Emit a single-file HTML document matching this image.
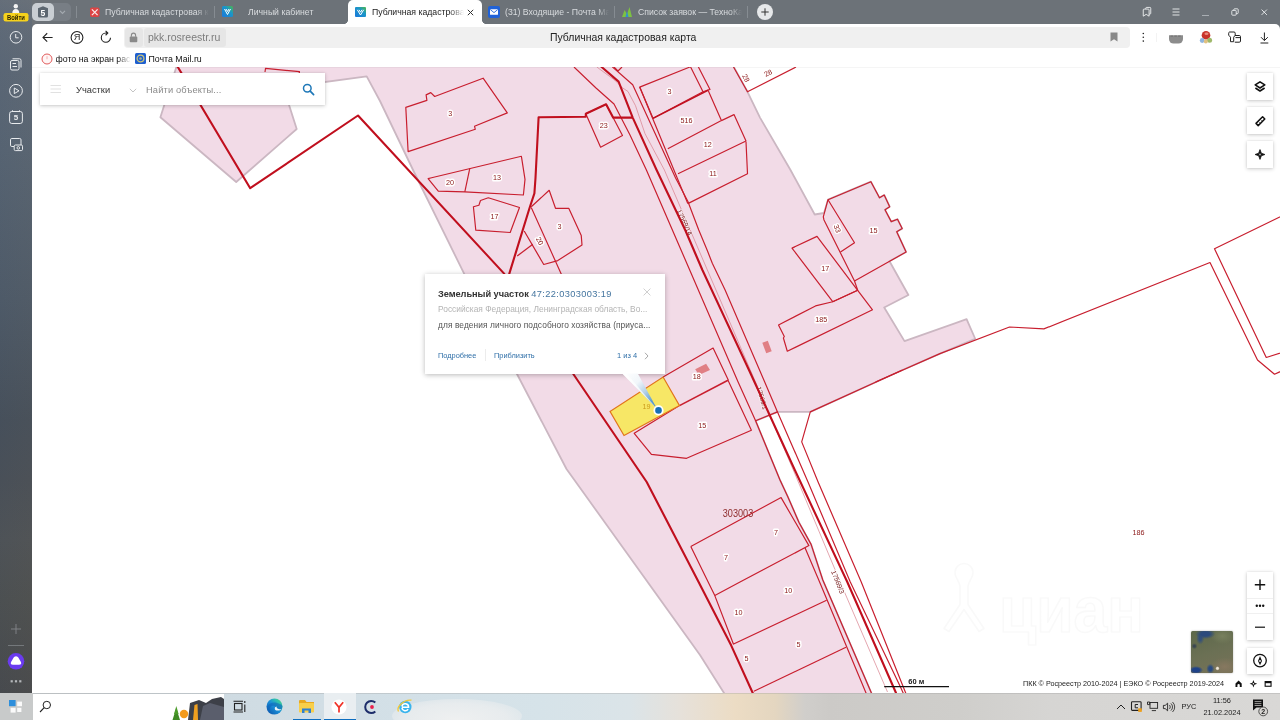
<!DOCTYPE html>
<html lang="ru">
<head>
<meta charset="utf-8">
<title>Публичная кадастровая карта</title>
<style>
*{box-sizing:border-box}
html,body{margin:0;padding:0}
body{width:1280px;height:720px;overflow:hidden;position:relative;background:#fff;font-family:"Liberation Sans",sans-serif;color:#222}
.abs{position:absolute}
#tabbar,#addr,#bm,#map,#taskbar,#sidebar,.t{will-change:transform}
svg{display:block;overflow:visible}
#tabbar{position:absolute;left:0;top:0;width:1280px;height:31px;background:#6c7278}
#sidebar{position:absolute;left:0;top:0;width:32px;height:693px;background:linear-gradient(90deg,rgba(60,90,130,.07),rgba(120,120,120,.05)),linear-gradient(180deg,#687079 0px,#616b77 26px,#5c6774 70px,#586471 150px,#4f5a66 300px,#474f58 420px,#4a4f55 480px,#4f5254 540px,#4d4f4e 600px,#48494a 693px)}
#content{position:absolute;left:32px;top:24px;width:1248px;height:669px;background:#fff;border-radius:5px 5px 0 0}
.tab{position:absolute;top:0;height:24px;font-size:8.7px;line-height:24px;color:#d9dcdf;white-space:nowrap;overflow:hidden}
.tab.active{background:#fff;color:#222;border-radius:5px 5px 0 0}
.tabsep{position:absolute;top:6px;width:1px;height:12px;background:#868c92}
#addr{position:absolute;left:124px;top:27px;width:1006px;height:21px;background:#f0f0f0;border-radius:4px}
#bm{position:absolute;left:32px;top:48px;width:1248px;height:19px;font-size:8.8px;color:#111}
#bm span{position:absolute;top:1px;line-height:21px;white-space:nowrap}
#map{position:absolute;left:32px;top:67px;width:1248px;height:626px;overflow:hidden;background:#fff}
#taskbar{position:absolute;left:0;top:693px;width:1280px;height:27px;overflow:hidden;background:linear-gradient(90deg,#c9ced1 0px,#cfdbe2 223px,#d3e0e7 400px,#d6e3e9 540px,#dbe4e8 630px,#e6e1da 680px,#ecdcc4 735px,#e4d6c0 775px,#d0cecb 805px,#cccac7 830px,#cfcecb 960px,#d6d5d3 1050px,#d9d8d6 1280px)}
.panel{position:absolute;background:#fff;box-shadow:0 1px 4px rgba(0,0,0,.2),0 0 2px rgba(0,0,0,.08)}
.lbl{font-size:7.2px;fill:#8a1616;text-anchor:middle;paint-order:stroke;stroke:#fff;stroke-width:3px;stroke-linejoin:round}
.t{position:absolute;white-space:nowrap;line-height:1}
</style>
</head>
<body>
<div id="tabbar">
  <!-- tab group -->
  <div class="abs" style="left:50px;top:3px;width:21px;height:18px;border-radius:0 5px 5px 0;background:#787e85"></div>
  <div class="abs" style="left:32px;top:3px;width:21.5px;height:18px;border-radius:5px;background:#c9ced3"></div>
  <svg class="abs" style="left:36px;top:5px" width="14" height="14" viewBox="0 0 14 14"><path d="M2,3.2 L7,1.2 L12,3.2 V11 a1.5,1.5 0 0 1 -1.5,1.5 H3.5 A1.5,1.5 0 0 1 2,11 Z" fill="#5c6670"/><text x="7" y="10.6" font-size="8.6" font-weight="bold" fill="#fff" text-anchor="middle" font-family="Liberation Sans, sans-serif">5</text></svg>
  <svg class="abs" style="left:58px;top:9px" width="9" height="6" viewBox="0 0 9 6"><path d="M2,1.8 L4.5,4.3 L7,1.8" fill="none" stroke="#a4aab0" stroke-width="1.2"/></svg>
  <div class="tabsep" style="left:76px"></div>
  <!-- tab1 -->
  <svg class="abs" style="left:89.5px;top:6.5px" width="9.5" height="10.5" viewBox="0 0 11 11"><rect width="11" height="11" rx="2" fill="#dc4444"/><path d="M2.2,2.2 L8.8,8.8 M8.8,2.2 L2.2,8.8" stroke="#fbe9e9" stroke-width="1.5"/></svg>
  <div class="tab" style="left:105px;width:104px;-webkit-mask-image:linear-gradient(90deg,#000 88%,transparent 100%)">Публичная кадастровая ка</div>
  <div class="tabsep" style="left:214px"></div>
  <!-- tab2 -->
  <svg class="abs" style="left:222px;top:6px" width="11" height="11" viewBox="0 0 11 11"><defs><linearGradient id="fg2" x1="0" y1="1" x2="1" y2="0"><stop offset="0" stop-color="#1a78dc"/><stop offset=".6" stop-color="#1b96c8"/><stop offset="1" stop-color="#4cb84a"/></linearGradient></defs><rect width="11" height="11" rx="1.5" fill="url(#fg2)"/><path d="M2.5,3 L5.5,8.5 L8.5,3 M4,3 L5.5,5.5 L7,3" stroke="#fff" stroke-width="1" fill="none"/></svg>
  <div class="tab" style="left:248px;width:80px">Личный кабинет</div>
  <!-- active tab -->
  <div class="tab active" style="left:348px;width:134px"></div>
  <div class="abs" style="left:343px;top:19px;width:5px;height:5px;background:radial-gradient(circle at 0 0,transparent 5px,#fff 5.5px)"></div>
  <div class="abs" style="left:482px;top:19px;width:5px;height:5px;background:radial-gradient(circle at 100% 0,transparent 5px,#fff 5.5px)"></div>
  <svg class="abs" style="left:355px;top:7px" width="11" height="10" viewBox="0 0 11 10"><defs><linearGradient id="fg" x1="0" y1="1" x2="1" y2="0"><stop offset="0" stop-color="#1a78dc"/><stop offset=".6" stop-color="#1b96c8"/><stop offset="1" stop-color="#4cb84a"/></linearGradient></defs><rect width="11" height="10" rx="1" fill="url(#fg)"/><path d="M2.3,2.8 L5.5,8 L8.7,2.8 M4,2.8 L5.5,5.2 L7,2.8" stroke="#fff" stroke-width="1" fill="none"/></svg>
  <div class="tab" style="left:372px;width:92px;color:#222;-webkit-mask-image:linear-gradient(90deg,#000 85%,transparent 100%)">Публичная кадастровая</div>
  <svg class="abs" style="left:467px;top:9px" width="7" height="7" viewBox="0 0 7 7"><path d="M0.8,0.8 L6.2,6.2 M6.2,0.8 L0.8,6.2" stroke="#333" stroke-width="1"/></svg>
  <!-- tab4 -->
  <svg class="abs" style="left:488px;top:6px" width="12" height="12" viewBox="0 0 12 12"><rect width="12" height="12" rx="2" fill="#2062d8"/><rect x="2" y="3.2" width="8" height="5.6" rx=".6" fill="#fff"/><path d="M2.3,3.6 L6,6.6 L9.7,3.6" stroke="#2062d8" stroke-width=".9" fill="none"/></svg>
  <div class="tab" style="left:505px;width:104px;-webkit-mask-image:linear-gradient(90deg,#000 88%,transparent 100%)">(31) Входящие - Почта Mail</div>
  <div class="tabsep" style="left:614px"></div>
  <!-- tab5 -->
  <svg class="abs" style="left:621px;top:6px" width="12" height="12" viewBox="0 0 12 12"><path d="M1,11 L3.5,4 L6,8 L8.5,1 L11,11 Z" fill="#7dc242"/><path d="M4.5,11 L6,5 L7.5,11 Z" fill="#2f8fd0"/></svg>
  <div class="tab" style="left:638px;width:104px;-webkit-mask-image:linear-gradient(90deg,#000 88%,transparent 100%)">Список заявок — ТехноКад</div>
  <div class="tabsep" style="left:747px"></div>
  <!-- new tab -->
  <div class="abs" style="left:757px;top:4px;width:16px;height:16px;border-radius:8px;background:#e6e8ea"></div>
  <svg class="abs" style="left:761px;top:8px" width="8" height="8" viewBox="0 0 8 8"><path d="M4,0.3 V7.7 M0.3,4 H7.7" stroke="#333" stroke-width="1"/></svg>
  <!-- window controls -->
  <svg class="abs" style="left:1142px;top:7px" width="10" height="10" viewBox="0 0 12 12" fill="none" stroke="#eef0f1" stroke-width="1.1"><path d="M4.5,2.5 V1.5 a1,1 0 0 1 1,-1 H9.5 a1,1 0 0 1 1,1 V7.5 a1,1 0 0 1 -1,1 H8.5"/><path d="M1.5,3.5 a1,1 0 0 1 1,-1 H7.5 a1,1 0 0 1 1,1 V11 L5,8.8 L1.5,11 Z"/></svg>
  <svg class="abs" style="left:1172px;top:8px" width="8" height="8" viewBox="0 0 8 8" stroke="#eef0f1" stroke-width=".9"><path d="M0.5,1 H7.5 M0.5,4 H7.5 M0.5,7 H7.5"/></svg>
  <div class="abs" style="left:1202px;top:14.5px;width:7px;height:1px;background:#a9aeb3"></div>
  <svg class="abs" style="left:1231px;top:8px" width="8" height="8" viewBox="0 0 10 10" fill="none" stroke="#eef0f1" stroke-width="1.1"><rect x="1" y="3" width="5.5" height="6" rx="1"/><path d="M3.5,3 V2 a1,1 0 0 1 1,-1 H8 a1,1 0 0 1 1,1 V6 a1,1 0 0 1 -1,1 H6.5"/></svg>
  <svg class="abs" style="left:1261px;top:9px" width="6.5" height="6.5" viewBox="0 0 8 8"><path d="M0.7,0.7 L7.3,7.3 M7.3,0.7 L0.7,7.3" stroke="#eef0f1" stroke-width="1.1"/></svg>
</div>
<div id="sidebar">
  <!-- profile -->
  <svg class="abs" style="left:0;top:0" width="32" height="24" viewBox="0 0 32 24"><circle cx="15.8" cy="6.2" r="2.2" fill="#f4f4f4"/><path d="M12.3,13.5 a3.5,4.6 0 0 1 7,0 Z" fill="#f4f4f4"/><rect x="3.5" y="13" width="25" height="8.6" rx="2.3" fill="#f6d21c"/><text x="16" y="19.8" font-size="6.6" font-weight="bold" fill="#2e2500" text-anchor="middle" textLength="18" lengthAdjust="spacingAndGlyphs" font-family="Liberation Sans, sans-serif">Войти</text></svg>
  <svg class="abs" style="left:0;top:24px" width="32" height="140" viewBox="0 24 32 140" fill="none" stroke="#e8ebee" stroke-width="1">
    <circle cx="16" cy="37.3" r="5.8"/><path d="M15.7,34 V37.8 H18.6"/>
    <rect x="10.5" y="60.5" width="8.5" height="9.5" rx="1.5"/><path d="M12.5,58.8 H19.5 a1.5,1.5 0 0 1 1.5,1.5 V67.5"/><path d="M12.5,63.5 H16 M12.5,66.5 H17"/>
    <circle cx="16" cy="90.8" r="6.4"/><path d="M14.3,88 L19,90.8 L14.3,93.6 Z"/>
    <rect x="9.6" y="111.5" width="12.8" height="12" rx="2.2"/><path d="M12.5,111 V110.3 M19.5,111 V110.3"/>
    <rect x="10.5" y="138.5" width="10.5" height="8" rx="1.3"/><rect x="14.2" y="145" width="8.3" height="5.6" rx="1.2" fill="#55616d"/><circle cx="18.3" cy="147.9" r="1.3"/>
  </svg>
  <div class="t" style="left:0;width:32px;top:113.6px;text-align:center;font-size:8px;font-weight:bold;color:#e8ebee">5</div>
  <svg class="abs" style="left:0;top:620px" width="32" height="70" viewBox="0 620 32 70"><path d="M16,624 V634 M11,629 H21" stroke="#83878a" stroke-width=".9" fill="none"/><path d="M8,645.5 H24" stroke="#74787b" stroke-width="1"/><circle cx="16" cy="661.3" r="8.3" fill="#6a3bf0"/><path d="M16,656.3 c1.2,0 1.9,0.7 2.6,1.8 l2.2,3.6 c1,1.7 0.2,3 -1.8,3 h-6 c-2,0 -2.8,-1.3 -1.8,-3 l2.2,-3.6 c0.7,-1.1 1.4,-1.8 2.6,-1.8 Z" fill="#fff"/><rect x="10.6" y="680.2" width="2.2" height="2.2" fill="#b4b7ba"/><rect x="14.9" y="680.2" width="2.2" height="2.2" fill="#b4b7ba"/><rect x="19.2" y="680.2" width="2.2" height="2.2" fill="#b4b7ba"/></svg>
</div>
<div id="content"></div>
<!-- toolbar -->
<svg class="abs" style="left:32px;top:24px" width="100" height="24" viewBox="32 23.55 100 24" fill="none" stroke="#222" stroke-width="1.1"><path d="M52.6,37 H43.2 M47.2,32.8 L43,37 L47.2,41.2"/><circle cx="77" cy="37" r="5.9"/><path d="M114.5,37.2 a4.6,4.6 0 1 1 -4.6,-4.6 h1.5 M109.6,30.4 L111.8,32.6 L109.6,34.8" transform="translate(-4,0)"/></svg>
<div class="t" style="left:71px;width:12px;top:33px;text-align:center;font-size:9.2px;color:#222">Я</div>
<div id="addr">
  <div class="abs" style="left:1px;top:1px;width:18px;height:19px;border-radius:3px;background:#e6e6e6"></div>
  <svg class="abs" style="left:5px;top:5px" width="9" height="11" viewBox="0 0 9 11"><rect x="0.7" y="4.6" width="7.6" height="5.6" rx="1" fill="#8a8a8a"/><path d="M2.4,4.8 V3.2 a2.1,2.1 0 0 1 4.2,0 V4.8" stroke="#8a8a8a" stroke-width="1.1" fill="none"/></svg>
  <div class="abs" style="left:20px;top:1px;width:82px;height:19px;border-radius:3px;background:#e6e6e6"></div>
  <div class="t" style="left:24px;top:5.3px;font-size:10.5px;color:#7c7c7c">pkk.rosreestr.ru</div>
  <div class="t" style="left:426px;width:146px;top:5.8px;font-size:10.45px;color:#222;text-align:center">Публичная кадастровая карта</div>
  <svg class="abs" style="left:986px;top:5px" width="8" height="10" viewBox="0 0 8 10"><path d="M0.5,0.5 H7.5 V9.5 L4,7.2 L0.5,9.5 Z" fill="#888"/></svg>
</div>
<svg class="abs" style="left:1136px;top:27px" width="144" height="21" viewBox="1136 27 144 21">
  <circle cx="1143.3" cy="33.5" r=".8" fill="#222"/><circle cx="1143.3" cy="37.3" r=".8" fill="#222"/><circle cx="1143.3" cy="41.1" r=".8" fill="#222"/>
  <path d="M1156.5,33 V42" stroke="#f3f3f3" stroke-width="1"/>
  <path d="M1169,35.2 H1183 V39 a4.5,4.6 0 0 1 -4.5,4.6 H1173.5 a4.5,4.6 0 0 1 -4.5,-4.6 Z" fill="#8c8c8c"/><path d="M1170.5,36.3 H1181.5" stroke="#7a7a7a" stroke-width="1.4" stroke-dasharray="2.6 1.2"/>
  <circle cx="1206" cy="35.2" r="4.3" fill="#c8332b"/><ellipse cx="1206.5" cy="33.8" rx="2" ry="1.2" fill="#e88a7c"/><circle cx="1202.2" cy="40.5" r="2.4" fill="#8fb4de"/><circle cx="1209.6" cy="40.3" r="2.5" fill="#9fb86a"/><circle cx="1205.8" cy="41.5" r="2" fill="#e0c080"/>
  <g fill="none" stroke="#222" stroke-width="1"><path d="M1229.5,32 h4.5 a1.2,1.2 0 0 1 1.2,1.2 v2 l-1.5,2 v4.5 h-3.2 v-4.5 l-1.8,-2 v-2 a1.2,1.2 0 0 1 0.8,-1.2 Z"/><path d="M1235,35.5 h4.3 a1.2,1.2 0 0 1 1.2,1.2 v4.3 a1.2,1.2 0 0 1 -1.2,1.2 h-4.5"/><path d="M1235.5,37.6 h5"/></g>
  <path d="M1264.4,32.5 V40.5 M1261,37.2 L1264.4,40.6 L1267.8,37.2 M1260.5,43 H1268.3" fill="none" stroke="#222" stroke-width="1"/>
</svg>
<div id="bm">
  <svg class="abs" style="left:9px;top:4.5px" width="12" height="12" viewBox="0 0 12 12"><circle cx="6" cy="6" r="5" fill="#fff5f5" stroke="#e05a5a" stroke-width="1"/><path d="M6,3.2 V6.2" stroke="#f0a0a0" stroke-width=".8"/></svg>
  <span style="left:23.5px;-webkit-mask-image:linear-gradient(90deg,#000 82%,transparent 100%)">фото на экран рас</span>
  <svg class="abs" style="left:103px;top:5px" width="11" height="11" viewBox="0 0 11 11"><rect width="11" height="11" rx="1.5" fill="#1e5fd0"/><circle cx="5.5" cy="5.5" r="3.4" fill="none" stroke="#c9c27a" stroke-width="1.3"/><circle cx="5.5" cy="5.5" r="1.3" fill="#a9b08a"/></svg>
  <span style="left:116.5px">Почта Mail.ru</span>
</div>
<div id="map">
<svg class="abs" style="left:-32px;top:-67px" width="1280" height="720" viewBox="0 0 1280 720" font-family="Liberation Sans, sans-serif">
<!-- quarter fill -->
<path id="quarter" fill="#f2dbe7" stroke="#cbb7c2" stroke-width="1.8" stroke-linejoin="round" d="M178.6,60 L160.4,117.2 L236.2,182 L296.7,129 L283.5,87.6 L366.7,76.4 L380,101 L414,172 L464,273.4 L517.5,375 L566.5,469 L639,570 L700,655 L723.4,692 L730,702 L875,702 L871,692 L822.8,580 L811.1,544.4 L798.9,522.2 L787.8,496.7 L780,480 L755.6,420.8 L777.5,411.9 L810.3,411.9 L902.5,370 L940,353.6 L975.2,338.75 L966.6,319.2 L904.5,341.1 L884.2,307.5 L908.4,295 L889.5,261.3 L906.1,252 L896.7,231.7 L902.2,228.6 L897.5,219.2 L891.25,221.6 L885,209.8 L889.7,206.7 L884.2,195 L879.5,197.8 L870.9,181.7 L828,199.7 L824,213 L814.7,214.5 L790.5,170 L760,117.6 L747.5,91.8 L730,60 Z"/>
<g fill="none" stroke="#c81e2e" stroke-width="1.18" stroke-linejoin="round">
<!-- parcel 3 left -->
<path d="M405.8,107.4 L426.9,100.4 L426.1,94.9 L430.8,92.6 L434.7,96.5 L483.1,78.2 L507.3,112.9 L474.5,126.2 L475.3,129.3 L408.1,151.6 Z"/>
<!-- parcels 20,13 -->
<path d="M431.6,177.7 L521.4,156.3 L525,179.4 L523.4,195 L464.8,191.9 L438.3,191.1 L428.1,178.6 Z"/>
<path d="M469.8,168.3 L464.8,191.9"/>
<!-- parcel 17 left -->
<path d="M473.4,206.7 L478.9,205.2 L480.5,200.5 L488.3,197.8 L519.5,207.5 L510.2,232.5 L475.8,230.2 Z"/>
<!-- parcel 3 mid & 20 strip -->
<path d="M531.25,206.7 L549.2,190.3 L555.5,208.3 L568.75,208.3 L581.25,235.6 L582,245 L557.8,260.6 L543.75,264.5 L524.2,231"/>
<path d="M531.25,207.5 L561,273.4 L566,284"/>
<path d="M517.2,256 L532.8,244.2"/>
<!-- small sliver top -->
<path d="M265,72 L265.5,68.4 L299.5,71.7 L299,74"/>
<!-- parcel 23 -->
<path d="M585.8,113.7 L606.1,104.3 L622.5,135.5 L600.6,147.25 Z"/>
<!-- parcel 3 right + strip -->
<path d="M639.7,87.1 L690.5,66.8 L703,91.8 L653,118.3 Z"/>
<path d="M698.3,66.8 L710,89.4 L703,91.8"/>
<!-- 516 -->
<path d="M708.4,91 L721.4,120.6 L667.8,148.8"/>
<!-- 12 -->
<path d="M721.4,120.6 L734,114.6 L746,141 L678,173.8"/>
<!-- 11 -->
<path d="M746,141.8 L747.5,173.8 L687.8,203.6"/>
<!-- parcels left boundary double -->
<path d="M639.7,87.1 L677.2,178 L687.8,203.6"/>
<!-- 28 -->
<path d="M733.4,66.8 L747.5,91.8 L796,67"/>
<!-- tick at top of road -->
<path d="M614,67 L618,71 L622,67"/>
<!-- road thin lines -->
<path id="L1" d="M574,67 L596,88 L614,104 L630,135 L646.4,170 L689.7,270 L738.1,382 L755.6,420.8 L780,480 L787.8,496.7 L798.9,522.2 L811.1,544.4 L822.8,580 L871,692 L875,702"/>
<path id="L1a" d="M805,547.8 L818.75,580 L865.6,692 L870,702"/>
<path id="L2" d="M612.3,66.8 L632.7,84.75 L675.6,178 L687.8,201.25 L698.75,230 L707.5,251 L712.3,263.3 L725,289.75 L764.7,382 L777.5,411.9 L808,482 L850.3,582 L900,686 L905,697"/>
<path id="L3" d="M902.5,370 L810.3,411.9 L801.7,441.9 L818.1,482 L861.25,582 L905.3,692 L909.4,702"/>
<path d="M755.6,420.8 L777.5,411.9"/>
<path stroke-width="0.7" stroke="#d8808c" d="M596.8,67 L614.8,80.2 L622.3,87.7 L628,91.5 L635.5,105.7 L645,133.7 L664.4,170 L793.3,470 L845.3,594 L887.5,692"/>
<!-- right big white parcels -->
<path d="M875.6,382 L940,353.6 L1009.5,327 L1043.9,328.9 L1210,262.5 L1257.5,360 L1274.5,374.25 L1285,369.5"/>
<path d="M1285,214.5 L1214.5,248.75 L1266.25,357.5 L1285,351.5"/>
<!-- parcel 15 / 33 upper right -->
<path d="M828,199.7 L870.9,181.7 L879.5,197.8 L884.2,195 L889.7,206.7 L885,209.8 L891.25,221.6 L897.5,219.2 L902.2,228.6 L896.7,231.7 L906.1,252 L854.5,281 L824,220 L823.3,216.9 Z"/>
<path d="M828,199.7 L854.5,242.7 L840.5,252"/>
<!-- 17 right -->
<path d="M792,248.1 L817,236.4 L857.7,290.3 L832.7,301.7 Z"/>
<path d="M854.5,281 L857.7,290.3"/>
<!-- 185 -->
<path d="M778.5,325 L815.5,305.9 L832.7,301.7 L857.7,290.3 L872.5,309.8 L787.3,351.25 L783.4,338 L784.3,336.5 Z"/>
<!-- parcel 18 -->
<path d="M663.1,377 L713.1,348.1 L728.4,380.2"/>
<!-- parcel 15 lower -->
<path d="M728,380.2 L751.4,430.2 L686.6,458.3 L651.4,454.4 L634.2,433.3 L679.5,405.6"/>
<path stroke-width="1.6" d="M679.5,405.6 L728,380.2"/>
<!-- parcels 7,10,5 -->
<path d="M690.8,546.6 L781.1,497.6 L808.9,545.6 L740,582 L714.8,595.6"/>
<path d="M690.8,546.6 L714.8,595.6 L733.6,644.5"/>
<path d="M733.6,644 L826.6,600.3"/>
<path d="M753.9,691.25 L846,647.2"/>
</g>
<!-- buildings -->
<path fill="#e07f84" d="M762.3,342.7 L767.8,340.8 L771.7,351.25 L766.25,353.3 Z"/>
<path fill="#e07f84" d="M695.2,369.2 L706.1,363.75 L710,370 L699,375 Z"/>
<g class="lbl" style="font-size:6.6px;fill:#701212">
<text transform="translate(684.7,222.3) rotate(65)" y="2.3" style="stroke:#f9eef3;stroke-width:1.4px">17569/14</text>
<text transform="translate(762,398) rotate(74)" y="2.3" style="stroke:#fbf3f6;stroke-width:1.6px">17569/1</text>
<text transform="translate(837.8,582) rotate(68)" y="2.3" style="stroke:#fff;stroke-width:2px;font-size:6.8px">17569/3</text>
</g>
<!-- thick lines -->
<g fill="none" stroke="#c00f1e" stroke-width="2.1" stroke-linejoin="round">
<path d="M173.6,60 L177.8,67 L250.2,188.2 L358,115.5 L503.9,273.4 L507,278 L573.3,374 L646.7,482 L698.6,582 L731.25,645.6 L752.3,692 L757,702"/>
<path d="M632.7,117.6 L613.1,117.6 L606.1,104.3 L585.8,113.7 L585.8,116.8 L538.6,117.25 L535.5,178 L534.4,193.4 L529.7,207.5 L509.4,273.4 L507,278"/>
<path d="M596,62 L601.4,66.8 L618.6,81.6 L632.7,117.6 L656.6,170 L685.2,230 L702.4,270 L749,370 L794.8,470 L847.3,582 L895.6,692 L900,702"/>
<path stroke-width="1.5" d="M653,118.3 L708.4,90.2"/>
</g>
<!-- selected parcel -->
<path fill="#f7e766" stroke="#e2741c" stroke-width="1.15" d="M610,411.4 L663.1,377 L679.5,405.6 L624,435.6 Z"/>
<!-- labels -->
<g class="lbl">
<text x="450.3" y="116.2">3</text>
<text x="450" y="184.7">20</text>
<text x="496.9" y="180.3">13</text>
<text x="494.5" y="218.6">17</text>
<text x="559.4" y="228.7">3</text>
<text x="603.7" y="127.9">23</text>
<text x="669.4" y="94.3">3</text>
<text x="686.6" y="122.7">516</text>
<text x="707.7" y="146.6">12</text>
<text x="713.1" y="176">11</text>
<text x="873.6" y="232.7">15</text>
<text x="825.3" y="271.2">17</text>
<text x="821.2" y="321.7">185</text>
<text x="696.7" y="379.1">18</text>
<text x="702.2" y="427.5">15</text>
<text x="776" y="534.5">7</text>
<text x="726" y="559.5">7</text>
<text x="788.3" y="593.1">10</text>
<text x="738.6" y="615">10</text>
<text x="798.4" y="646.5">5</text>
<text x="746.4" y="661.1">5</text>
<text x="1138.5" y="534.5" style="stroke:none">186</text>
<text transform="translate(539.8,241.1) rotate(62)" y="2.5">20</text>
<text transform="translate(837.3,228.6) rotate(68)" y="2.5">33</text>
<text transform="translate(746,78) rotate(62)" y="2.5" style="stroke:none">28</text>
<text transform="translate(768,73) rotate(-28)" y="2.5" style="stroke:none">28</text>
<text x="646.4" y="409.2" style="fill:#cc9c1c;stroke:none">19</text>
<text x="738" y="516.8" textLength="30.5" lengthAdjust="spacingAndGlyphs" style="font-size:10.6px;fill:#8f2e2e;stroke:none">303003</text>
</g>
<!-- watermark -->
<g fill="#fff" stroke="rgba(90,90,90,.035)" stroke-width="1.6" stroke-linejoin="round">
<path d="M964,563.5 a9,9 0 0 1 9,9 c0,5 -4,8 -5,14 l0,18 l16,24 l-5,3 l-15,-22 l-15,22 l-5,-3 l16,-24 l0,-18 c-1,-6 -5,-9 -5,-14 a9,9 0 0 1 9,-9 Z"/>
<text x="999" y="632" font-size="64" font-weight="bold" textLength="145" lengthAdjust="spacingAndGlyphs">циан</text>
</g>
<!-- scale -->
<path d="M884.2,686.7 H949" stroke="#111" stroke-width="1.3" fill="none"/>
<text x="916.3" y="684" font-size="7.5" font-weight="bold" fill="#222" text-anchor="middle">60 м</text>
</svg>
<div class="abs" style="left:0;top:0;width:1248px;height:1px;background:rgba(120,120,120,.07)"></div>
<!-- search panel -->
<div class="panel" style="left:8px;top:6px;width:285px;height:32.4px">
  <svg class="abs" style="left:10px;top:11px" width="12" height="10" viewBox="0 0 12 10"><path d="M0.5,1.5 H11 M0.5,5 H11 M0.5,8.5 H11" stroke="#e1e1e1" stroke-width="1"/></svg>
  <div class="t" style="left:35.5px;top:12.8px;font-size:9.3px;color:#333">Участки</div>
  <svg class="abs" style="left:89px;top:14.5px" width="8" height="5" viewBox="0 0 8 5"><path d="M0.8,0.8 L4,4 L7.2,0.8" fill="none" stroke="#c4c4c4" stroke-width="1"/></svg>
  <div class="t" style="left:105.6px;top:12.8px;font-size:9.3px;letter-spacing:.15px;color:#8a8a8a">Найти объекты...</div>
  <svg class="abs" style="left:262px;top:10px" width="13" height="13" viewBox="0 0 13 13"><circle cx="5.3" cy="5.3" r="3.8" fill="none" stroke="#1f78b8" stroke-width="1.5"/><path d="M8.2,8.2 L11.6,11.6" stroke="#1f78b8" stroke-width="1.7" stroke-linecap="round"/></svg>
</div>
<!-- right tools -->
<div class="panel" style="left:1215px;top:6px;width:26px;height:26.5px"></div>
<div class="panel" style="left:1215px;top:40px;width:26px;height:26.5px"></div>
<div class="panel" style="left:1215px;top:74px;width:26px;height:26.5px"></div>
<svg class="abs" style="left:1215px;top:6px" width="26" height="95" viewBox="0 0 26 95" fill="none" stroke="#111" stroke-width="1.6" stroke-linejoin="round">
  <path d="M13,8.8 L17.8,11.9 L13,15 L8.2,11.9 Z"/><path d="M8.4,15 L13,18 L17.6,15"/>
  <path d="M9,50.4 L15.6,43.8 L17.8,46 L11.2,52.6 Z" stroke-width="1.5"/><path d="M12.2,49.4 L13,50.2 M14.4,47.2 L15.2,48" stroke-width=".8"/>
  <path d="M13,76.6 L14.3,80.2 L17.9,81.5 L14.3,82.8 L13,86.4 L11.7,82.8 L8.1,81.5 L11.7,80.2 Z" fill="#111" stroke-width=".8"/><circle cx="13" cy="81.5" r="1.1" fill="#999" stroke="none"/>
</svg>
<!-- zoom controls -->
<div class="panel" style="left:1215px;top:504.5px;width:26px;height:68.5px"></div>
<div class="abs" style="left:1215px;top:530.5px;width:26px;height:1px;background:#f0f0f0"></div>
<div class="abs" style="left:1215px;top:546px;width:26px;height:1px;background:#f0f0f0"></div>
<svg class="abs" style="left:1215px;top:504.5px" width="26" height="69" viewBox="0 0 26 69"><path d="M13,7.5 V18 M7.8,12.7 H18.2" stroke="#111" stroke-width="1.4"/><circle cx="9.8" cy="33.8" r="1.2" fill="#111"/><circle cx="13" cy="33.8" r="1.2" fill="#111"/><circle cx="16.2" cy="33.8" r="1.2" fill="#111"/><path d="M8,55.2 H18" stroke="#111" stroke-width="1.2"/></svg>
<div class="panel" style="left:1215px;top:581px;width:26px;height:25.5px"></div>
<svg class="abs" style="left:1215px;top:581px" width="26" height="26" viewBox="0 0 26 26"><circle cx="13" cy="12.6" r="6.3" fill="none" stroke="#111" stroke-width="1.3"/><path d="M13,8 L15,13 L13,17.2 L11,13 Z" fill="#111"/><circle cx="13" cy="13" r=".9" fill="#fff"/></svg>
<!-- minimap -->
<div class="abs" style="left:1159px;top:564px;width:42px;height:41.5px;border-radius:1.5px;box-shadow:0 0 2px rgba(0,0,0,.3);background:radial-gradient(ellipse 10px 5px at 34% 7%,#2c4a7c 45%,rgba(60,90,110,0) 100%),radial-gradient(ellipse 4px 6px at 22% 18%,#34507a 30%,rgba(60,90,110,0) 100%),radial-gradient(ellipse 3px 3px at 8% 36%,#3a4650 30%,rgba(60,70,70,0) 100%),radial-gradient(ellipse 7px 4px at 12% 93%,#1f4288 50%,rgba(40,70,120,0) 100%),radial-gradient(ellipse 4px 5px at 46% 90%,#2a4a80 40%,rgba(40,70,120,0) 100%),radial-gradient(circle 2.2px at 63% 89%,#efe6d6 40%,rgba(230,220,200,0) 100%),radial-gradient(ellipse 14px 9px at 80% 85%,#877860 0,rgba(135,120,96,0) 100%),radial-gradient(ellipse 12px 8px at 75% 12%,#78805e 0,rgba(120,128,94,0) 100%),linear-gradient(160deg,#5c684a 0%,#6b7054 50%,#777258 100%)"></div>
<!-- attribution -->
<div class="t" style="left:990.5px;top:612.6px;font-size:7.23px;color:#1c1c1c">ПКК © Росреестр 2010-2024 | ЕЭКО © Росреестр 2019-2024</div>
<svg class="abs" style="left:1200px;top:611px" width="46" height="12" viewBox="1232 678 46 12"><path d="M1238.6,680.6 L1241.7,683.5 V687 H1239.8 V685.2 a1.2,1.2 0 0 0 -2.4,0 V687 H1235.5 V683.5 Z" fill="#111"/><path d="M1253.4,680 L1254.4,682.8 L1257.2,683.8 L1254.4,684.8 L1253.4,687.6 L1252.4,684.8 L1249.6,683.8 L1252.4,682.8 Z" fill="#111"/><circle cx="1253.4" cy="683.8" r=".8" fill="#fff"/><rect x="1264.6" y="681" width="7" height="5.8" fill="#111"/><rect x="1265.7" y="683.2" width="4.8" height="2.5" fill="#fff"/></svg>
<!-- popup -->
<div class="abs" style="left:393px;top:207px;width:240px;height:99.6px;background:#fff;box-shadow:0 1px 5px rgba(0,0,0,.28)">
  <div class="t" style="left:13.3px;top:16px;font-size:9.25px;color:#333"><b style="letter-spacing:-.05px">Земельный участок</b> <span style="color:#44759f;letter-spacing:.36px">47:22:0303003:19</span></div>
  <svg class="abs" style="left:218px;top:13.7px" width="8" height="8" viewBox="0 0 8 8"><path d="M0.6,0.6 L7.4,7.4 M7.4,0.6 L0.6,7.4" stroke="#cfcfcf" stroke-width="1"/></svg>
  <div class="t" style="left:13.3px;top:31.2px;font-size:8.38px;color:#b4b4b4">Российская Федерация, Ленинградская область, Во...</div>
  <div class="t" style="left:13.3px;top:46.6px;font-size:8.35px;letter-spacing:.09px;color:#555">для ведения личного подсобного хозяйства (приуса...</div>
  <div class="t" style="left:13.3px;top:77.9px;font-size:7.4px;color:#2f6fa8">Подробнее</div>
  <div class="abs" style="left:59.5px;top:75px;width:1px;height:12px;background:#ececec"></div>
  <div class="t" style="left:68.5px;top:77.9px;font-size:7.4px;color:#2f6fa8">Приблизить</div>
  <div class="t" style="left:192px;top:77.9px;font-size:7.5px;color:#2f6fa8">1 из 4</div>
  <svg class="abs" style="left:219px;top:77.5px" width="5" height="8" viewBox="0 0 5 8"><path d="M1,0.8 L4,4 L1,7.2" fill="none" stroke="#a8a8a8" stroke-width="1"/></svg>
</div>
<svg class="abs" style="left:580px;top:300px" width="60" height="60" viewBox="612 367 60 60"><defs><linearGradient id="tail" x1="0" y1="0" x2="1" y2="1"><stop offset="0" stop-color="#ffffff"/><stop offset=".35" stop-color="#f1f6fa"/><stop offset=".6" stop-color="#b3d0e7"/><stop offset=".82" stop-color="#5e9dd0"/><stop offset="1" stop-color="#3f88c6"/></linearGradient></defs><path d="M622.3,373.6 H637.8 L656.8,408.4 Z" fill="url(#tail)"/><path d="M622.3,373.6 H626.5 L656.4,408.2 Z" fill="#fff" opacity=".75"/><circle cx="658.5" cy="410.4" r="5.1" fill="#fff"/><circle cx="658.5" cy="410.4" r="3.3" fill="#166fb6"/></svg>
</div>
<div id="taskbar">
  <div class="abs" style="left:392px;top:6px;width:130px;height:34px;border-radius:50%;background:radial-gradient(ellipse at 50% 60%,rgba(240,241,241,.95) 0,rgba(236,238,239,.8) 55%,rgba(230,236,239,0) 100%)"></div>
  <div class="abs" style="left:0;top:0;width:1280px;height:1px;background:rgba(160,160,160,.35)"></div>
  <div class="abs" style="left:0;top:0;width:33px;height:27px;background:#c8caca"></div>
  <svg class="abs" style="left:9px;top:7px" width="14" height="14" viewBox="0 0 14 14"><rect x="0" y="0" width="6.6" height="6.2" fill="#2e8fdc"/><rect x="8.2" y="1.6" width="4.8" height="4.6" fill="#fafafa"/><rect x="1.6" y="7.8" width="5" height="4.8" fill="#fafafa"/><rect x="8.2" y="7.8" width="4.2" height="4.2" fill="#fafafa"/></svg>
  <div class="abs" style="left:33px;top:1px;width:191px;height:25.5px;background:#fff"></div>
  <svg class="abs" style="left:39px;top:7px" width="13" height="13" viewBox="0 0 13 13"><circle cx="7.8" cy="5" r="3.7" fill="none" stroke="#222" stroke-width="1"/><path d="M5.2,7.7 L1,12" stroke="#222" stroke-width="1.1"/></svg>
  <svg class="abs" style="left:170px;top:1px" width="54" height="26" viewBox="170 0 54 26"><path d="M188,26 L190,9 L199,6 L206,9 L212,5 L221,3 L224,5 V26 Z" fill="#3d4048"/><path d="M200,26 L203,12 L210,9 L224,13 V26 Z" fill="#5a5e6c"/><path d="M193,26 L194.5,11 L197.5,10 L198,26 Z" fill="#f0a020"/><circle cx="184" cy="20" r="4.2" fill="#f39a1c"/><path d="M172.5,26 L176.3,14 L180,26 Z" fill="#3f8a24"/><path d="M174,20 L176.3,12 L178.6,20 Z" fill="#4c9c2a"/></svg>
  <svg class="abs" style="left:233px;top:7px" width="14" height="13" viewBox="0 0 14 13" fill="none" stroke="#222" stroke-width="1.1"><rect x="1.5" y="3.5" width="7.5" height="6.5"/><path d="M0.5,1.2 H10 M0.5,12 H10 M11.8,1 V3 M11.8,4.6 V12"/></svg>
  <svg class="abs" style="left:265.5px;top:5px" width="17" height="17" viewBox="0 0 17 17"><defs><linearGradient id="eg" x1="0" y1="1" x2="1" y2="0"><stop offset="0" stop-color="#0c50a8"/><stop offset=".5" stop-color="#1a8fd8"/><stop offset=".75" stop-color="#2fc0b0"/><stop offset="1" stop-color="#5ed46a"/></linearGradient></defs><circle cx="8.5" cy="8.5" r="8" fill="url(#eg)"/><path d="M16.4,8 c0.2,3 -1.8,4.6 -4.4,4.6 c-2.4,0 -3.4,-1.5 -3,-2.6 c0.3,-0.8 0.2,-1.6 -0.8,-2 c-2,-0.8 -4.4,0.6 -4.6,3.2 c-0.2,2.4 1.6,4.6 4.2,5.2 c-4,0.2 -7,-3 -7,-7 c1.4,-4 6,-5.4 9.6,-4.6 c3.2,0.8 5.8,2 6,3.2 Z" fill="#0f62b8" opacity=".55"/><path d="M8.8,10.2 c-0.3,1.2 0.8,2.4 3,2.4 c1.6,0 3,-0.6 3.8,-1.6 c-0.6,0.2 -1.4,0.3 -2.2,0.2 c-2,-0.2 -3,-1.4 -2.8,-2.6 c-1,0.2 -1.6,0.8 -1.8,1.6 Z" fill="#eaf4f8"/></svg>
  <svg class="abs" style="left:298px;top:6px" width="17" height="15" viewBox="0 0 17 15"><path d="M1,2 a1,1 0 0 1 1,-1 H7 L8.5,3 H16 V13 H1 Z" fill="#e8a820"/><rect x="1" y="4" width="15" height="9.5" rx=".8" fill="#f8cf4a"/><path d="M4,14 V9.5 H13 V14 H10.5 V11.5 H6.5 V14 Z" fill="#2f80d0"/></svg>
  <div class="abs" style="left:293px;top:25.6px;width:28px;height:1.4px;background:#0d6ec0"></div>
  <div class="abs" style="left:323.5px;top:0;width:32px;height:27px;background:#e9eef1"></div>
  <div class="abs" style="left:323.5px;top:25.6px;width:32px;height:1.4px;background:#0d6ec0"></div>
  <svg class="abs" style="left:331px;top:6px" width="16" height="16" viewBox="0 0 16 16"><circle cx="8" cy="8" r="7.6" fill="#fff"/><path d="M3.8,3.2 L8,8.3 L12.2,3.2 M8,8 V13.6" fill="none" stroke="#f03228" stroke-width="1.7"/></svg>
  <svg class="abs" style="left:363px;top:6px" width="16" height="16" viewBox="0 0 16 16"><path d="M12.3,3.6 a6,6 0 1 0 0,8.8" fill="none" stroke="#1c2d6a" stroke-width="2"/><circle cx="9" cy="8" r="1.9" fill="#e8204c"/></svg>
  <svg class="abs" style="left:396px;top:5px" width="18" height="17" viewBox="0 0 18 17"><circle cx="9.3" cy="9" r="6.2" fill="#3ab4ec"/><path d="M5.8,9.3 H12.6 a3.4,3.4 0 0 0 -6.7,-1 M5.9,10 a3.4,3.4 0 0 0 6.2,1.2" stroke="#fff" stroke-width="1.5" fill="none"/><path d="M2.5,13.5 C0,9 8,1 15.5,2.2" stroke="#f2c83a" stroke-width="1.3" fill="none"/></svg>
  <!-- tray -->
  <svg class="abs" style="left:1112px;top:0" width="70" height="27" viewBox="1112 693 70 27" fill="none" stroke="#222" stroke-width="1"><path d="M1117,709 L1121,705 L1125,709"/><rect x="1131.5" y="701.8" width="9.6" height="8.6" rx=".8" stroke-width="1.1"/><path d="M1138,704.5 H1135.2 V707.8 H1138"/><rect x="1138.2" y="708.3" width="3.6" height="3.6" fill="#f0a018" stroke="none"/><rect x="1150" y="702.5" width="7.6" height="5.8" stroke-width=".9"/><path d="M1147.5,702 h2.2 v2.6 h-2.2 Z M1151.8,710.6 H1156" stroke-width=".9"/><path d="M1163.4,705.4 h1.8 l2.4,-2.2 v7.6 l-2.4,-2.2 h-1.8 Z" stroke-width=".9"/><path d="M1169.3,705 a2.6,2.6 0 0 1 0,4 M1170.9,703.4 a4.8,4.8 0 0 1 0,7.2 M1172.5,702 a6.8,6.8 0 0 1 0,10" stroke-width=".8"/></svg>
  <div class="t" style="left:1180px;width:18px;top:10px;font-size:7.4px;color:#222;text-align:center">РУС</div>
  <div class="t" style="left:1202px;width:40px;top:3.6px;font-size:7.4px;color:#222;text-align:center">11:56</div>
  <div class="t" style="left:1197px;width:50px;top:15.8px;font-size:7.4px;color:#222;text-align:center">21.02.2024</div>
  <svg class="abs" style="left:1250px;top:5px" width="22" height="20" viewBox="1250 698 22 20"><path d="M1253,699.4 H1263 V707.4 H1256.5 L1253,710.4 Z" fill="#111"/><path d="M1254.6,701.6 H1261.4 M1254.6,703.6 H1261.4 M1254.6,705.5 H1261.4" stroke="#d8d6d3" stroke-width=".7"/><circle cx="1263.2" cy="711.4" r="4.4" fill="#d8d6d3" stroke="#333" stroke-width=".8"/><text x="1263.2" y="714" font-size="7" font-weight="bold" fill="#222" text-anchor="middle" font-family="Liberation Sans, sans-serif">2</text></svg>
</div>
</body>
</html>
